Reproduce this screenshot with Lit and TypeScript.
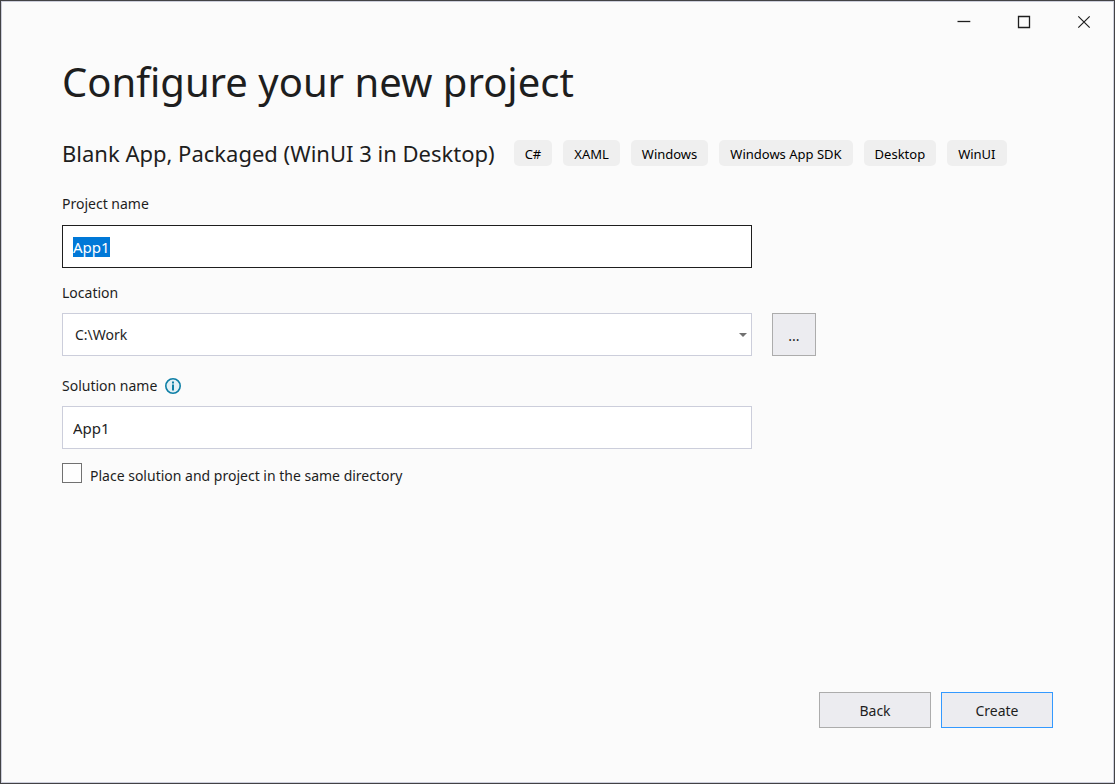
import { LitElement, html, css } from "lit";
import { customElement, property, query } from "lit/decorators.js";

@customElement("window-controls")
class WindowControls extends LitElement {
  static styles = css`
    :host {
      display: flex;
      justify-content: flex-end;
    }
    .control {
      width: 60px;
      height: 42px;
      padding: 0;
      border: 0;
      background: none;
      display: grid;
      place-items: center;
    }
    .control:hover {
      background: #ececf0;
    }
    .glyph {
      display: block;
      fill: none;
      stroke: #1e1e1e;
    }
  `;

  render() {
    return html`
      <button class="control" type="button" aria-label="Minimize">
        <svg class="glyph" width="14" height="14" viewBox="0 0 14 14">
          <path d="M0.5 6.5H13.3" stroke-width="1.3" />
        </svg>
      </button>
      <button class="control" type="button" aria-label="Maximize">
        <svg class="glyph" width="14" height="14" viewBox="0 0 14 14">
          <path d="M1.5 1.5H12.5V12.5H1.5Z" stroke-width="1.3" />
        </svg>
      </button>
      <button class="control" type="button" aria-label="Close">
        <svg class="glyph" width="14" height="14" viewBox="0 0 14 14">
          <path d="M1.3 1.3L12.7 12.7M12.7 1.3L1.3 12.7" stroke-width="1.2" />
        </svg>
      </button>
    `;
  }
}

@customElement("template-header")
class TemplateHeader extends LitElement {
  @property() name = "";
  @property({ attribute: false }) tags: string[] = [];

  static styles = css`
    :host {
      display: flex;
      flex-wrap: wrap;
      align-items: center;
      gap: 10px 19px;
    }
    .name {
      margin: 0;
      font-size: 22px;
      line-height: 26px;
      font-weight: 400;
    }
    .tags {
      display: flex;
      flex-wrap: wrap;
      gap: 11px;
      margin: 0;
      padding: 0;
      list-style: none;
    }
    .tag {
      padding: 2px 11px 0;
      border-radius: 5px;
      background: #efefef;
      color: #000;
      font-size: 13px;
      line-height: 24px;
    }
  `;

  render() {
    return html`
      <h2 class="name">${this.name}</h2>
      <ul class="tags">
        ${this.tags.map((tag) => html`<li class="tag">${tag}</li>`)}
      </ul>
    `;
  }
}

@customElement("app-root")
class AppRoot extends LitElement {
  @query("#project") private projectInput!: HTMLInputElement;

  private tags = ["C#", "XAML", "Windows", "Windows App SDK", "Desktop", "WinUI"];

  static styles = css`
    :host {
      display: flex;
      flex-direction: column;
      box-sizing: border-box;
      min-height: 100vh;
      border: 1px solid #424245;
      box-shadow: inset 0 0 0 1px #cccedb;
      background: #fbfbfb;
      color: #1e1e1e;
      font-family: "Noto Sans", "Open Sans", sans-serif;
      font-size: 14px;
      line-height: 20px;
    }
    .content {
      flex: 1;
      display: flex;
      flex-direction: column;
      padding: 13px 61px 55px;
    }
    .title {
      margin: 0 0 32px;
      font-size: 40px;
      line-height: 52px;
      font-weight: 400;
    }
    .form {
      display: flex;
      flex-direction: column;
      margin-top: 28px;
    }
    .field {
      display: grid;
      grid-template-columns: minmax(0, 690px) 44px;
      gap: 10px 20px;
      margin-bottom: 14px;
    }
    .field.project {
      row-gap: 11px;
      margin-bottom: 15px;
    }
    .field.location {
      margin-bottom: 20px;
    }
    .label {
      grid-column: 1 / -1;
      display: flex;
      align-items: center;
      gap: 8px;
    }
    .box {
      box-sizing: border-box;
      width: 100%;
      height: 43px;
      margin: 0;
      padding: 0 10px;
      border: 1px solid #cccedb;
      border-radius: 0;
      outline: none;
      background: #fff;
      color: #1e1e1e;
      font: inherit;
      font-size: 15px;
      appearance: none;
    }
    .box:focus {
      border-color: #1e1e1e;
    }
    .box::selection {
      background: #0078d7;
      color: #fff;
    }
    .combo {
      display: grid;
      align-items: center;
    }
    .combo > * {
      grid-area: 1 / 1;
    }
    .combo .box {
      padding: 0 24px 0 12px;
      font-size: 14px;
    }
    .arrow {
      justify-self: end;
      margin-right: 5px;
      fill: #717171;
      pointer-events: none;
    }
    .button {
      box-sizing: border-box;
      margin: 0;
      padding: 2px 0 0;
      border: 1px solid #acacac;
      border-radius: 0;
      background: #ececf0;
      color: #1e1e1e;
      font: inherit;
    }
    .button.primary {
      border-color: #3399ff;
    }
    .check {
      display: flex;
      align-items: flex-start;
      gap: 8px;
    }
    .tick {
      box-sizing: border-box;
      width: 20px;
      height: 20px;
      margin: 0;
      border: 1px solid #717171;
      background: #fefefe;
      appearance: none;
    }
    .tick:checked {
      background: #0078d7;
    }
    .check-label {
      padding-top: 3px;
    }
    .actions {
      display: flex;
      justify-content: flex-end;
      gap: 10px;
      margin-top: auto;
    }
    .actions .button {
      width: 112px;
      height: 36px;
    }
  `;

  firstUpdated() {
    this.projectInput.focus();
    this.projectInput.select();
  }

  render() {
    return html`
      <window-controls></window-controls>
      <main class="content">
        <h1 class="title">Configure your new project</h1>
        <template-header
          name="Blank App, Packaged (WinUI 3 in Desktop)"
          .tags=${this.tags}
        ></template-header>
        <form class="form">
          <div class="field project">
            <label class="label" for="project">Project name</label>
            <input class="box" id="project" type="text" value="App1" autocomplete="off" />
          </div>
          <div class="field location">
            <label class="label" for="location">Location</label>
            <div class="combo">
              <select class="box" id="location">
                <option>C:\\Work</option>
              </select>
              <svg class="arrow" width="8" height="4" viewBox="0 0 8 4">
                <path d="M0 0H8L4 4Z" />
              </svg>
            </div>
            <button class="button" type="button" aria-label="Browse">...</button>
          </div>
          <div class="field">
            <label class="label" for="solution">
              Solution name
              <svg width="16" height="16" viewBox="0 0 16 16">
                <circle cx="8" cy="8" r="7.2" fill="#e3f0f5" stroke="#0e7fa6" stroke-width="1.6" />
                <path d="M7 3.6H9V5.4H7ZM7 6.6H9V12.4H7Z" fill="#0e7fa6" />
              </svg>
            </label>
            <input class="box" id="solution" type="text" value="App1" autocomplete="off" />
          </div>
          <div class="check">
            <input class="tick" id="same" type="checkbox" />
            <label class="check-label" for="same">Place solution and project in the same directory</label>
          </div>
        </form>
        <div class="actions">
          <button class="button" type="button">Back</button>
          <button class="button primary" type="button">Create</button>
        </div>
      </main>
    `;
  }
}
